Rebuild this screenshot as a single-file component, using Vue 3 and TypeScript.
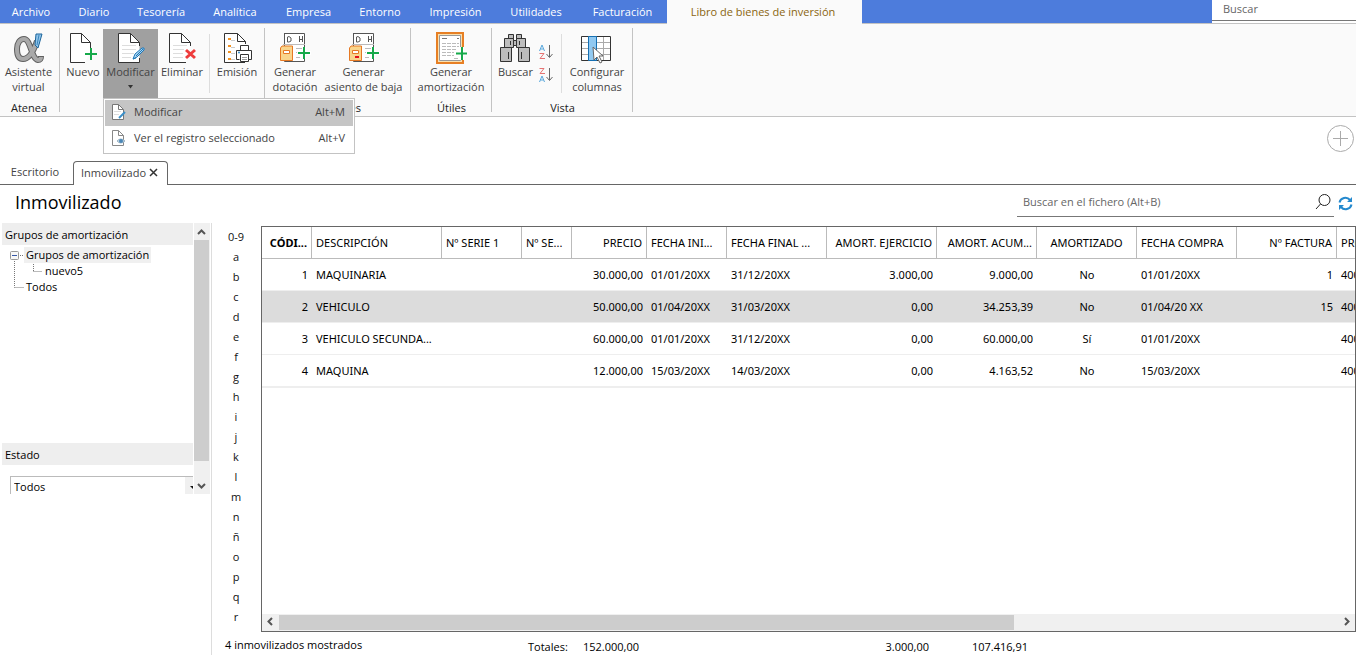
<script setup lang="ts">
import { ref } from 'vue'

interface Column {
  label: string
  width: number
  align: 'left' | 'right' | 'center'
}

const menu: string[] = [
  'Archivo', 'Diario', 'Tesorería', 'Analítica', 'Empresa', 'Entorno',
  'Impresión', 'Utilidades', 'Facturación', 'Libro de bienes de inversión',
]

const columns: Column[] = [
  { label: 'CÓDI...', width: 50, align: 'right' },
  { label: 'DESCRIPCIÓN', width: 130, align: 'left' },
  { label: 'Nº SERIE 1', width: 80, align: 'left' },
  { label: 'Nº SE...', width: 50, align: 'left' },
  { label: 'PRECIO', width: 75, align: 'right' },
  { label: 'FECHA INI...', width: 80, align: 'left' },
  { label: 'FECHA FINAL ...', width: 100, align: 'left' },
  { label: 'AMORT. EJERCICIO', width: 110, align: 'right' },
  { label: 'AMORT. ACUM...', width: 100, align: 'right' },
  { label: 'AMORTIZADO', width: 100, align: 'center' },
  { label: 'FECHA COMPRA', width: 100, align: 'left' },
  { label: 'Nº FACTURA', width: 100, align: 'right' },
  { label: 'PROVEEDOR', width: 100, align: 'left' },
]

const rows: string[][] = [
  ['1', 'MAQUINARIA', '', '', '30.000,00', '01/01/20XX', '31/12/20XX', '3.000,00', '9.000,00', 'No', '01/01/20XX', '1', '40000'],
  ['2', 'VEHICULO', '', '', '50.000,00', '01/04/20XX', '31/03/20XX', '0,00', '34.253,39', 'No', '01/04/20 XX', '15', '40000'],
  ['3', 'VEHICULO SECUNDA...', '', '', '60.000,00', '01/01/20XX', '31/12/20XX', '0,00', '60.000,00', 'Sí', '01/01/20XX', '', '40000'],
  ['4', 'MAQUINA', '', '', '12.000,00', '15/03/20XX', '14/03/20XX', '0,00', '4.163,52', 'No', '15/03/20XX', '', '40000'],
]

const letters: string[] = ['0-9', ...'abcdefghijklmnñopqr']
const activeMenu = ref(9)
const selected = ref(1)
const status = ref('Todos')
</script>

<template>
  <div class="app">
    <header class="topbar">
      <nav class="menu">
        <button
          v-for="(item, i) in menu"
          :key="item"
          type="button"
          :class="{ active: i === activeMenu }"
          @click="activeMenu = i"
        >{{ item }}</button>
      </nav>
      <input class="global-search" type="text" placeholder="Buscar" aria-label="Buscar">
    </header>

    <section class="ribbon">
      <div class="group atenea">
        <div class="tools">
          <button type="button" class="tool">
            <svg width="32" height="32" viewBox="0 0 32 32" fill="none">
              <path d="M24 9 C21 18 17 27 10 27 C5 27 4 22 4 17 C4 11 7 7 11 7 C18 7 18 27 25 28 C27 28 28 27 28 24" stroke="#5f5f5f" stroke-width="6" />
              <path d="M24 9 C21 18 17 27 10 27 C5 27 4 22 4 17 C4 11 7 7 11 7 C18 7 18 27 25 28 C27 28 28 27 28 25" stroke="#a9a9a9" stroke-width="4" />
              <path d="M23 2 H29 L25 16 L22 13 Z" fill="#8fc4ea" stroke="#1d659b" />
              <path d="M26 3 L24 13" stroke="#3b86bd" />
            </svg>
            <span>Asistente<br>virtual</span>
          </button>
        </div>
        <div class="caption">Atenea</div>
      </div>

      <div class="group records">
        <div class="tools">
          <button type="button" class="tool nuevo">
            <svg width="32" height="32" viewBox="-1 0 32 32" fill="none">
              <path d="M22.500 19 V10.500 L13.500 1.500 H2.500 V30.500 H17" fill="#fff" stroke="#333" />
              <path d="M13.500 1.500 V10.500 H22.500" stroke="#333" />
              <path d="M17 22 H29 M23 16 V28" stroke="#16a94a" stroke-width="2" />
            </svg>
            <span>Nuevo</span>
          </button>
          <div class="dropdown">
            <button type="button" class="tool modificar" aria-expanded="true">
              <svg width="32" height="32" viewBox="0 0 32 32" fill="none">
                <path d="M24.500 14 V10.500 L15.500 1.500 H3.500 V30.500 H24.500 V26" fill="#fff" stroke="#333" />
                <path d="M24 12 V28 H16 Z" fill="#fff" />
                <path d="M15.500 1.500 V10.500 H24.500" stroke="#333" />
                <path d="M7 13.500 H21 M7 17.500 H21 M7 21.500 H19 M7 25.500 H16" stroke="#ddd" />
                <path d="M18 27 L20 22 L27 16 Q30 15 29 18 L22 25 Z" fill="#a9d5f3" stroke="#1f77b7" />
                <path d="M21 24 L28 17 M18 27 L21 26" stroke="#1f77b7" />
              </svg>
              <span>Modificar</span>
              <svg class="caret" width="7" height="4" viewBox="0 0 7 4"><path d="M1 0 H6 L3.500 3.500 Z" fill="#333" /></svg>
            </button>
            <div class="popup" role="menu">
              <button type="button" role="menuitem" class="current">
                <svg width="16" height="18" viewBox="0 0 16 18" fill="none">
                  <path d="M1.500 1.500 H7.500 L12.500 6.500 V16.500 H1.500 Z" fill="#fff" stroke="#777" />
                  <path d="M7.500 1.500 V6.500 H12.500" stroke="#777" />
                  <path d="M3 8.500 H10 M3 11.500 H8" stroke="#ddd" />
                  <path d="M8 15 L14 9" stroke="#3a8fc9" stroke-width="2" />
                </svg>
                <span>Modificar</span><kbd>Alt+M</kbd>
              </button>
              <button type="button" role="menuitem">
                <svg width="16" height="18" viewBox="0 0 16 18" fill="none">
                  <path d="M1.500 1.500 H7.500 L12.500 6.500 V16.500 H1.500 Z" fill="#fff" stroke="#888" />
                  <path d="M7.500 1.500 V6.500 H12.500" stroke="#888" />
                  <path d="M6 12 Q9.500 8 14 12 Q9.500 16 6 12" fill="#c9d9e4" stroke="#9db4c5" />
                  <circle cx="10" cy="12" r="2" fill="#4b88b8" />
                </svg>
                <span>Ver el registro seleccionado</span><kbd>Alt+V</kbd>
              </button>
            </div>
          </div>
          <button type="button" class="tool eliminar">
            <svg width="32" height="32" viewBox="0 0 32 32" fill="none">
              <path d="M24.500 14 V10.500 L15.500 1.500 H3.500 V30.500 H20" fill="#fff" stroke="#333" />
              <path d="M15.500 1.500 V10.500 H24.500" stroke="#333" />
              <path d="M7 13.500 H21 M7 17.500 H18 M7 21.500 H17 M7 25.500 H17" stroke="#ddd" />
              <path d="M20 18 L29 26 M29 18 L20 26" stroke="#ee3c3c" stroke-width="3" />
            </svg>
            <span>Eliminar</span>
          </button>
          <i class="divider"></i>
          <button type="button" class="tool emision">
            <svg width="32" height="32" viewBox="0 0 32 32" fill="none">
              <path d="M24.500 12 V9.500 L16.500 1.500 H3.500 V30.500 H24" fill="#fff" stroke="#333" />
              <path d="M16.500 1.500 V9.500 H24.500" stroke="#333" />
              <path d="M7 7 H10 M7 14 H10 M7 20 H10 M7 27 H10" stroke="#f39322" stroke-width="2" />
              <path d="M10 8.500 H14 M10 15.500 H14 M10 21.500 H14 M10 27.500 H14" stroke="#ccc" />
              <path d="M19.500 18 V13.500 H27.500 V18 M15.500 18.500 H30.500 V27.500 H27.500 M18.500 27.500 H15.500 V18.500" fill="#fff" stroke="#333" />
              <path d="M19.500 22.500 H27.500 V29.500 H19.500 Z" fill="#fff" stroke="#333" />
              <path d="M21 25.500 H26 M21 27.500 H26" stroke="#999" />
              <circle cx="18" cy="20.500" r="1" fill="#2f8ac5" />
            </svg>
            <span>Emisión</span>
          </button>
        </div>
      </div>

      <div class="group actions">
        <div class="tools">
          <button v-for="(label, i) in ['dotación', 'asiento de baja']" :key="label" type="button" class="tool" :class="i ? 'asiento' : 'dotacion'">
            <svg width="32" height="32" viewBox="0 0 32 32" fill="none">
              <path d="M5 1.500 H25.500 V29.500 H5.500 V1.500" fill="#fff" stroke="#555" />
              <path d="M8.500 5 V10 H10 L12 9 V6 L10 4.500 Z M20.500 4 V10 M23.500 4 V10 M20.500 7.500 H23.500" stroke="#555" />
              <path d="M4 12.500 H26 M17 16.500 H24 M17 20.500 H20 M17 25.500 H21" stroke="#bbb" />
              <path d="M3 14 L1.500 16 V28.500 H13.500 V14 Z" fill="#f9d58c" stroke="#e67924" />
              <path d="M4.500 18.500 H10.500 V21.500 H4.500 Z" fill="#fff" stroke="#e67924" />
              <rect v-if="i" x="7" y="24" width="4" height="2" fill="#e40e19" />
              <path d="M18 21 H32 M25 15 V27" stroke="#fff" stroke-width="4" />
              <path d="M19 21 H31 M25 15 V27" stroke="#16a94a" stroke-width="2" />
            </svg>
            <span>Generar<br>{{ label }}</span>
          </button>
        </div>
        <div class="caption">Acciones</div>
      </div>

      <div class="group utiles">
        <div class="tools">
          <button type="button" class="tool">
            <svg width="32" height="32" viewBox="-1 0 32 32" fill="none">
              <path d="M1 1 H27 V31 H1 Z" fill="#fae0ae" stroke="#e77f24" stroke-width="2" />
              <path d="M3.500 3.500 H24.500 V28.500 H3.500 Z" fill="#fff" stroke="#999" />
              <path d="M6 6.500 H11 M21 6.500 H23" stroke="#777" />
              <path d="M6 11.500 H23 M6 14.500 H23 M6 17.500 H20 M6 20.500 H18 M6 23.500 H18 M18 26.500 H23" stroke="#bbb" stroke-dasharray="4 1" />
              <path d="M19 21.500 H31 M26 15 V28" stroke="#fff" stroke-width="4" />
              <path d="M20 21.500 H31 M26 15 V28" stroke="#16a94a" stroke-width="2" />
            </svg>
            <span>Generar<br>amortización</span>
          </button>
        </div>
        <div class="caption">Útiles</div>
      </div>

      <div class="group vista">
        <div class="tools">
          <button type="button" class="tool buscar">
            <svg width="32" height="32" viewBox="1 0 32 32" fill="#bdbdbd" stroke="#333">
              <path d="M9.500 2.500 H14.500 V6.500 H9.500 Z M17.500 2.500 H22.500 V6.500 H17.500 Z M5.500 6.500 H14.500 V15.500 H5.500 Z M17.500 6.500 H26.500 V15.500 H17.500 Z" />
              <path d="M14.500 8.500 H17.500 V13.500 H14.500 Z M1.500 15.500 H12.500 V29.500 H1.500 Z M19.500 15.500 H30.500 V29.500 H19.500 Z" />
              <path d="M11.500 9 V13 M20.500 9 V13 M9.500 20 V27 M22.500 20 V27" />
            </svg>
            <span>Buscar</span>
          </button>
          <div class="sorts">
            <button v-for="desc in [false, true]" :key="String(desc)" type="button" :aria-label="desc ? 'Orden descendente' : 'Orden ascendente'">
              <svg width="15" height="16" viewBox="0 0 15 16" fill="none">
                <path :transform="desc ? 'translate(0 8)' : ''" d="M.5 7 L3 1 L5.500 7 M1.500 5 H4.500" stroke="#58a7dc" />
                <path :transform="desc ? 'translate(0 -8)' : ''" d="M.5 9.500 H5 L1 14.500 H6" stroke="#e57373" />
                <path d="M10.500 1 V13 M7.500 10 L10.500 13.500 L13.500 10" stroke="#666" />
              </svg>
            </button>
          </div>
          <i class="divider"></i>
          <button type="button" class="tool configurar">
            <svg width="32" height="32" viewBox="1 0 32 32" fill="none">
              <path d="M1.500 4.500 H30.500 V28.500 H1.500 Z" fill="#fff" />
              <path d="M2 10.500 H30 M2 16.500 H30 M2 22.500 H30 M23.500 5 V28" stroke="#aaa" />
              <path d="M1.500 4.500 H30.500 V28.500 H1.500 Z" stroke="#333" />
              <path d="M8.500 4.500 H16.500 V28.500 H8.500 Z" fill="#91c9f1" stroke="#1670b3" />
              <path d="M13 15 L14 28 L17 25 L20 31 L22 30 L19 24 H23 Z" fill="#fff" stroke="#666" />
            </svg>
            <span>Configurar<br>columnas</span>
          </button>
        </div>
        <div class="caption">Vista</div>
      </div>
    </section>

    <div class="tabs-row">
      <div class="doc-tabs">
        <button type="button" class="doc-tab">Escritorio</button>
        <div class="doc-tab open">
          <span>Inmovilizado</span>
          <button type="button" aria-label="Cerrar">
            <svg width="10" height="9" viewBox="0 0 10 9"><path d="M1 1 L8 8 M8 1 L1 8" stroke="#333" stroke-width="1.500" /></svg>
          </button>
        </div>
      </div>
      <button type="button" class="add" aria-label="Añadir">
        <svg width="27" height="27" viewBox="0 0 27 27" fill="none" stroke="#aaa">
          <circle cx="13.500" cy="13.500" r="13" /><path d="M6 13.500 H21 M13.500 6 V21" />
        </svg>
      </button>
    </div>

    <div class="title-row">
      <h1>Inmovilizado</h1>
      <div class="file-search">
        <input type="text" placeholder="Buscar en el fichero (Alt+B)" aria-label="Buscar en el fichero">
        <button type="button" aria-label="Buscar">
          <svg width="16" height="16" viewBox="0 0 16 16" fill="none" stroke="#222"><circle cx="9.500" cy="6" r="5.500" /><path d="M5.500 10 L1 15" /></svg>
        </button>
      </div>
      <button type="button" class="refresh" aria-label="Actualizar">
        <svg width="15" height="15" viewBox="0 0 15 15" fill="none" stroke="#2489ce" stroke-width="2">
          <path d="M1.500 6.500 A6 6 0 0 1 12 4 M13.500 8.500 A6 6 0 0 1 3 11" />
          <path d="M14 1 V6 H9 Z M1 14 V9 H6 Z" fill="#2489ce" stroke="none" />
        </svg>
      </button>
    </div>

    <div class="body">
      <aside class="side">
        <div class="side-view">
          <div class="side-content">
            <h2>Grupos de amortización</h2>
            <div class="tree">
              <svg width="32" height="48" viewBox="0 0 32 48" fill="none">
                <path d="M4.500 14 V40.500 M4.500 40.500 H14 M10 8.500 H14 M23.500 17 V24.500 M23.500 24.500 H32" stroke="#777" stroke-dasharray="1 1" />
                <rect x=".5" y="4.500" width="8" height="8" rx="1" fill="#f7f7f7" stroke="#999" />
                <path d="M2 8.500 H7" stroke="#3557a8" />
              </svg>
              <ul>
                <li><span class="chosen">Grupos de amortización</span>
                  <ul><li>nuevo5</li></ul>
                </li>
                <li>Todos</li>
              </ul>
            </div>
            <h2><label for="estado">Estado</label></h2>
            <div class="state">
              <select id="estado" v-model="status"><option>Todos</option><option>Activos</option></select>
              <svg width="13" height="20" viewBox="0 0 13 20"><rect width="13" height="20" fill="#f0f0f0" /><path d="M5 9 H12 L8.500 12.500 Z" fill="#111" /></svg>
            </div>
          </div>
          <div class="vbar">
            <svg width="16" height="17" viewBox="0 0 16 17"><path d="M4 11 L7.500 7.500 L11 11" fill="none" stroke="#555" stroke-width="2" /></svg>
            <i></i>
            <svg width="16" height="17" viewBox="0 0 16 17"><path d="M4 7 L7.500 10.500 L11 7" fill="none" stroke="#555" stroke-width="2" /></svg>
          </div>
        </div>
      </aside>

      <nav class="letters">
        <a v-for="l in letters" :key="l" href="#">{{ l }}</a>
      </nav>

      <main class="content">
        <div class="grid">
          <div class="scroller">
            <table>
              <colgroup><col v-for="c in columns" :key="c.label" :style="{ width: c.width + 'px' }"></colgroup>
              <thead>
                <tr><th v-for="c in columns" :key="c.label" scope="col" :class="c.align">{{ c.label }}</th></tr>
              </thead>
              <tbody>
                <tr v-for="(r, i) in rows" :key="r[0]" :class="{ selected: i === selected }" @click="selected = i">
                  <td v-for="(c, j) in columns" :key="c.label" :class="c.align">{{ r[j] }}</td>
                </tr>
              </tbody>
            </table>
          </div>
          <div class="hbar">
            <svg width="17" height="16" viewBox="0 0 17 16"><path d="M10 4 L6.500 7.500 L10 11" fill="none" stroke="#555" stroke-width="2" /></svg>
            <div class="track"><i></i></div>
            <svg width="17" height="16" viewBox="0 0 17 16"><path d="M7 4 L10.500 7.500 L7 11" fill="none" stroke="#555" stroke-width="2" /></svg>
          </div>
        </div>
      </main>

      <footer class="totals">
        <span class="count">4 inmovilizados mostrados</span>
        <span>Totales:</span>
        <output>152.000,00</output>
        <output>3.000,00</output>
        <output>107.416,91</output>
      </footer>
    </div>
  </div>
</template>

<style>
body {
  margin: 0;
  background: #fff;
}
</style>

<style scoped>
* {
  box-sizing: border-box;
}

.app {
  display: flex;
  flex-direction: column;
  height: 100vh;
  overflow: hidden;
  font: 11px/16px "Open Sans", "Noto Sans", sans-serif;
  color: #000;
}

button, input, select {
  margin: 0;
  padding: 0;
  border: 0;
  background: none;
  font: inherit;
  color: inherit;
}

svg {
  display: block;
  flex: none;
}

/* Menu bar */
.topbar {
  display: flex;
  align-items: flex-start;
  height: 24px;
  flex: none;
  border-bottom: 1px solid #c3c3c3;
}

.menu {
  display: grid;
  grid-template-columns: 62px 64px 70px 78px 69px 74px 77px 84px 89px 195px;
  flex: 1;
  height: 23px;
  background: #4d7cdc;
  color: #fff;
}

.menu button {
  white-space: nowrap;
}

.menu .active {
  height: 24px;
  padding: 0 3px 1px 0;
  background: #fafafa;
  color: #8a6510;
}

.global-search {
  width: 144px;
  height: 21px;
  padding: 0 11px 3px;
  border-bottom: 1px solid #777;
  outline: 0;
}

input::placeholder {
  color: #666;
  opacity: 1;
}

/* Ribbon */
.ribbon {
  display: flex;
  flex: none;
  height: 93px;
  padding-top: 4px;
  border-bottom: 1px solid #c3c3c3;
  background: #fafafa;
  color: #444;
}

.group {
  position: relative;
  padding-top: 1px;
}

.group::after {
  content: "";
  position: absolute;
  top: 0;
  right: 0;
  width: 1px;
  height: 84px;
  background: #c3c3c3;
}

.tools {
  display: flex;
  height: 69px;
}

.tool {
  display: flex;
  flex-direction: column;
  align-items: center;
  height: 69px;
  padding-top: 3px;
  line-height: 15px;
  text-align: center;
  white-space: nowrap;
}

.caption {
  margin-top: 3px;
  line-height: 14px;
  text-align: center;
  color: #222;
}

.atenea { width: 60px; padding-right: 2px; }
.atenea .tool { width: 57px; }
.records { width: 205px; padding-left: 3px; }
.nuevo { width: 40px; }
.modificar { width: 55px; background: #a0a0a0; }
.eliminar { width: 48px; }
.emision { width: 54px; }
.actions { width: 146px; padding-left: 1px; }
.dotacion { width: 58px; }
.asiento { width: 79px; }
.utiles { width: 81px; }
.utiles .tool { width: 80px; }
.vista { width: 141px; }
.buscar { width: 47px; }
.configurar { width: 70px; }

.caret {
  margin-top: 6px;
}

.divider {
  width: 1px;
  height: 59px;
  margin: 5px 0 0 3px;
  background: #ddd;
}

.sorts {
  display: flex;
  flex-direction: column;
  gap: 7px;
  padding-top: 15px;
}

.sorts + .divider {
  margin-left: 7px;
}

.dropdown {
  position: relative;
}

.popup {
  position: absolute;
  top: 69px;
  left: 0;
  z-index: 5;
  width: 252px;
  padding: 1px;
  border: 1px solid #c3c3c3;
  background: #fff;
}

.popup button {
  display: flex;
  align-items: center;
  width: 100%;
  height: 26px;
  padding: 0 8px 2px 6px;
  text-align: left;
  white-space: nowrap;
}

.popup .current {
  background: #c5c5c5;
}

.popup span {
  flex: 1;
  padding-left: 7px;
}

.popup kbd {
  font: inherit;
}

/* Document tabs */
.tabs-row {
  display: flex;
  flex: none;
  justify-content: space-between;
  align-items: flex-end;
  height: 68px;
  padding-right: 2px;
  border-bottom: 1px solid #666;
}

.doc-tabs {
  display: flex;
  align-items: flex-end;
  margin-bottom: -1px;
  color: #444;
}

.doc-tab {
  width: 73px;
  height: 24px;
  padding: 0 3px 3px 0;
}

.doc-tab.open {
  display: flex;
  align-items: center;
  justify-content: space-between;
  width: 95px;
  padding: 0 8px 2px 7px;
  border: 1px solid #666;
  border-bottom: 0;
  border-radius: 4px 4px 0 0;
  background: #fff;
}

.add {
  align-self: flex-start;
  margin-top: 8px;
}

/* Title and file search */
.title-row {
  display: flex;
  flex: none;
  height: 38px;
  padding: 3px 3px 0 15px;
}

h1 {
  flex: 1;
  margin: 0;
  font-size: 18px;
  line-height: 28px;
  font-weight: 400;
}

.file-search {
  display: flex;
  align-items: center;
  width: 317px;
  height: 29px;
  padding: 0 3px 0 6px;
  border-bottom: 1px solid #777;
}

.file-search input {
  flex: 1;
  outline: 0;
}

.refresh {
  height: 30px;
  margin-left: 4px;
}

/* Body */
.body {
  display: grid;
  flex: 1;
  min-height: 0;
  grid-template: minmax(0, 1fr) 23px / 212px 49px minmax(0, 1fr);
}

.side {
  grid-row: 1 / 3;
  padding-left: 2px;
  border-right: 1px solid #ddd;
}

.side-view {
  display: flex;
  height: 271px;
  overflow: hidden;
}

.side-content {
  width: 191px;
  overflow: hidden;
}

h2 {
  margin: 0;
  padding: 2px 0 0 3px;
  font-size: 11px;
  font-weight: 400;
  line-height: 20px;
  background: #eee;
}

.tree {
  display: flex;
  height: 198px;
  padding: 2px 0 0 8px;
}

.tree ul {
  margin: 0;
  padding: 0;
  list-style: none;
}

.tree > ul {
  margin-left: -16px;
}

.tree ul ul {
  padding-left: 19px;
}

.chosen {
  display: inline-block;
  margin-left: -2px;
  padding: 0 2px;
  background: #f0f0f0;
}

.state {
  display: flex;
  width: 190px;
  height: 22px;
  margin: 11px 0 0 8px;
  border: 1px solid #bbb;
}

.state select {
  flex: none;
  width: 174px;
  height: 20px;
  padding-left: 3px;
  appearance: none;
}

.vbar {
  display: flex;
  flex-direction: column;
  justify-content: space-between;
  width: 16px;
  margin-left: 1px;
  background: #f0f0f0;
}

.vbar i {
  width: 15px;
  height: 221px;
  margin-bottom: auto;
  background: #cdcdcd;
}

.letters {
  display: flex;
  flex-direction: column;
  align-items: center;
  padding: 4px 1px 0 0;
  overflow: hidden;
}

.letters a {
  flex: none;
  color: #111;
  line-height: 20px;
  text-decoration: none;
}

.content {
  display: flex;
  padding-top: 3px;
}

.grid {
  display: flex;
  flex: 1;
  flex-direction: column;
  min-width: 0;
  border: 1px solid #666;
}

.scroller {
  flex: 1;
  overflow: hidden;
}

table {
  width: 1175px;
  table-layout: fixed;
  border-collapse: separate;
  border-spacing: 0;
  border-bottom: 1px solid #eee;
  font-family: "Noto Sans", "Open Sans", sans-serif;
}

th, td {
  height: 32px;
  padding: 0 4px;
  border-bottom: 1px solid #eee;
  font-weight: 400;
  white-space: nowrap;
}

th {
  border-right: 1px solid #bbb;
  border-bottom-color: #bbb;
}

th:first-child {
  font-weight: 700;
}

.left { text-align: left; }
.right { text-align: right; }
.center { text-align: center; }

.selected {
  background: #dcdcdc;
}

.hbar {
  display: flex;
  height: 17px;
  background: #f0f0f0;
}

.track {
  flex: 1;
}

.track i {
  display: block;
  width: 69.4%;
  height: 15px;
  margin-top: 1px;
  background: #cdcdcd;
}

.totals {
  display: grid;
  grid-column: 2 / 4;
  grid-template-columns: 303px 39px 72px 290px 99px;
  align-items: center;
  padding: 6px 0 0 13px;
  line-height: 14px;
  white-space: nowrap;
}

.totals output {
  text-align: right;
}

.totals .count {
  padding-bottom: 4px;
}
</style>
